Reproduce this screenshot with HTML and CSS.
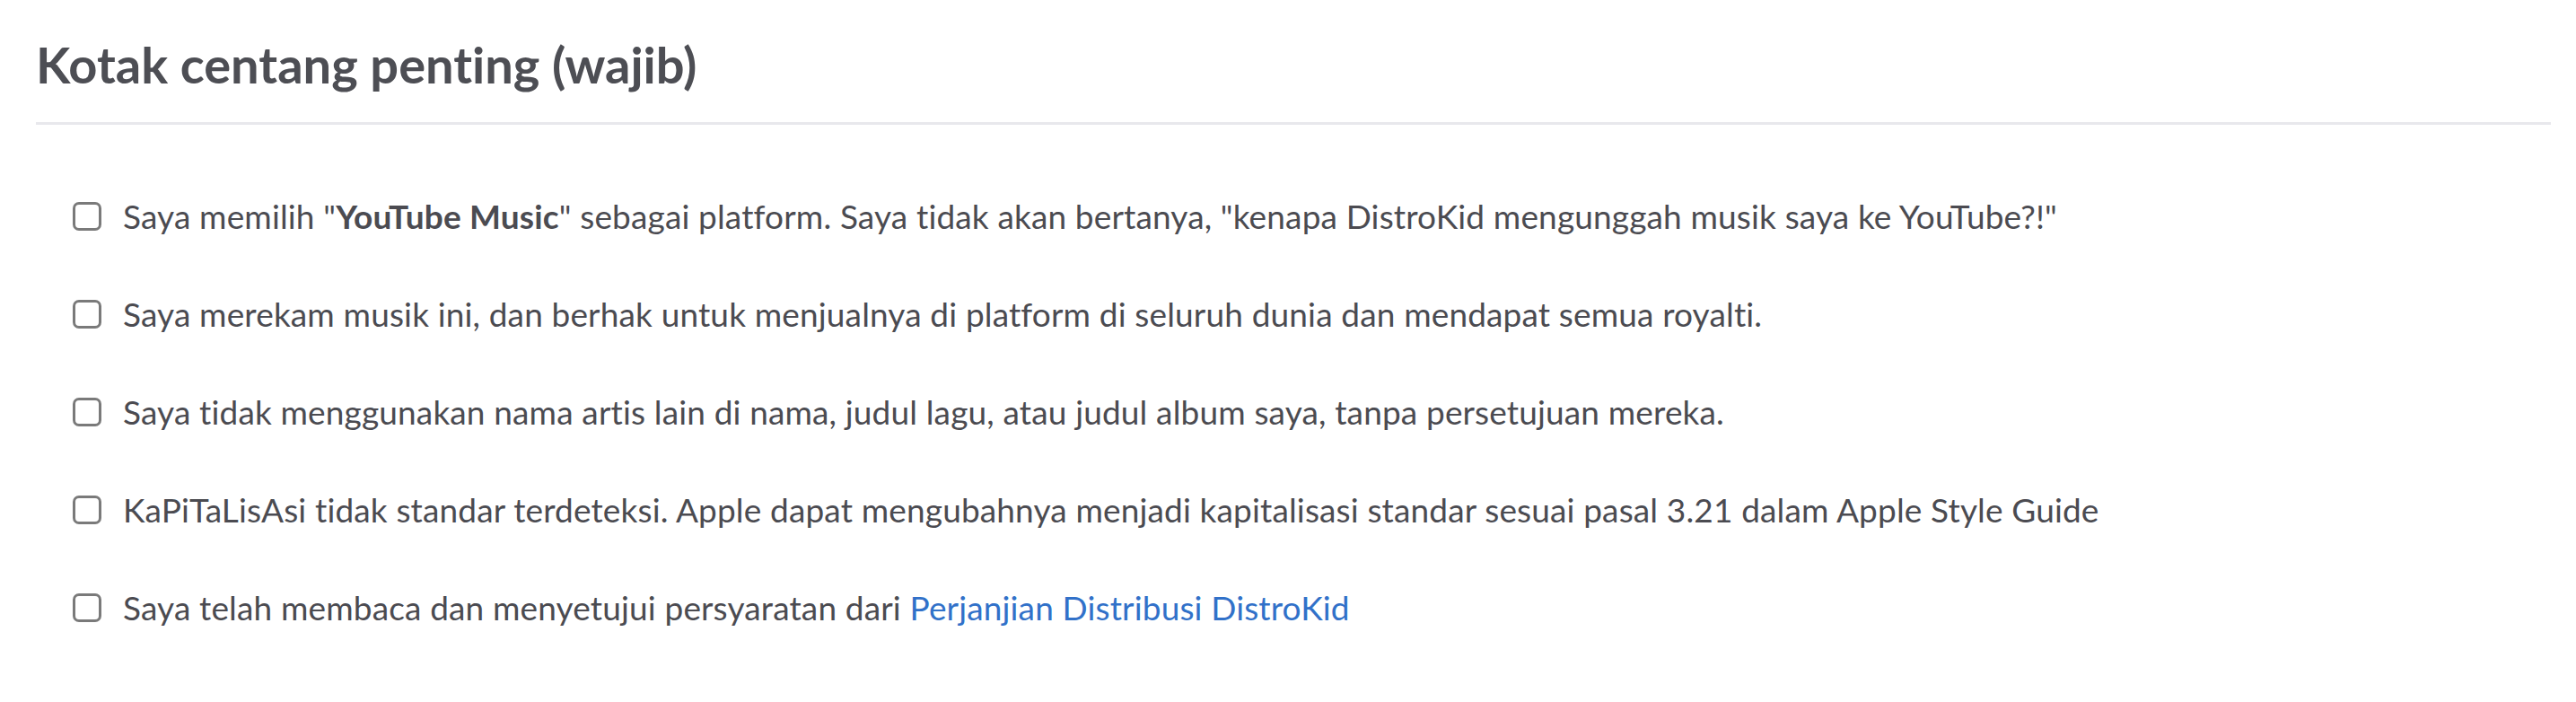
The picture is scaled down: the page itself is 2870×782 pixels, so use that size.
FILE: index.html
```html
<!DOCTYPE html>
<html lang="id">
  <head>
    <meta charset="UTF-8" />
    <meta name="viewport" content="width=device-width, initial-scale=1.0" />
    <title>Kotak centang penting</title>
    <link rel="stylesheet" href="styles.css">
  </head>

  <body>
    <section class="checks">
      <h2 class="checks-title">Kotak centang penting (wajib)</h2>

      <!-- Required checkboxes -->
      <ul class="check-list">
        <li>
          <label class="check-item">
            <input type="checkbox" name="youtube" />
            <span>Saya memilih "<b>YouTube Music</b>" sebagai platform. Saya tidak akan bertanya, "kenapa DistroKid mengunggah musik saya ke YouTube?!"</span>
          </label>
        </li>
        <li>
          <label class="check-item">
            <input type="checkbox" name="rights" />
            <span>Saya merekam musik ini, dan berhak untuk menjualnya di platform di seluruh dunia dan mendapat semua royalti.</span>
          </label>
        </li>
        <li>
          <label class="check-item">
            <input type="checkbox" name="artists" />
            <span>Saya tidak menggunakan nama artis lain di nama, judul lagu, atau judul album saya, tanpa persetujuan mereka.</span>
          </label>
        </li>
        <li>
          <label class="check-item">
            <input type="checkbox" name="caps" />
            <span>KaPiTaLisAsi tidak standar terdeteksi. Apple dapat mengubahnya menjadi kapitalisasi standar sesuai pasal 3.21 dalam Apple Style Guide</span>
          </label>
        </li>
        <li>
          <label class="check-item">
            <input type="checkbox" name="agreement" />
            <span>Saya telah membaca dan menyetujui persyaratan dari <a href="#">Perjanjian Distribusi DistroKid</a></span>
          </label>
        </li>
      </ul>
    </section>
  </body>
</html>
```

FILE: styles.css
```css
* {
  margin: 0;
  padding: 0;
  box-sizing: border-box;
}

body {
  font-family: Lato, "Open Sans", sans-serif;
  background: #fff;
  color: #4b4b51;
  font-variant-ligatures: none;
}

.checks {
  padding: 0 28px 0 40px;
}

.checks-title {
  font-size: 56px;
  font-weight: 700;
  color: #4d4e54;
  padding-top: 38px;
  padding-bottom: 31px;
  line-height: 1.2;
  border-bottom: 3px solid #e8e8ec;
}

.check-list {
  list-style: none;
  padding: 86px 0 0 41px;
}

.check-list li {
  margin-bottom: 77px;
}

.check-item {
  display: flex;
  align-items: center;
  gap: 24px;
  font-size: 37px;
  letter-spacing: 0.15px;
  line-height: 32px;
  cursor: pointer;
}

.check-item input {
  appearance: none;
  -webkit-appearance: none;
  width: 32px;
  height: 32px;
  flex-shrink: 0;
  border: 3px solid #7a7a7a;
  border-radius: 7px;
  background: #fff;
}

.check-item b {
  font-weight: 700;
}

.check-item a {
  color: #3171c9;
  text-decoration: none;
}
```
